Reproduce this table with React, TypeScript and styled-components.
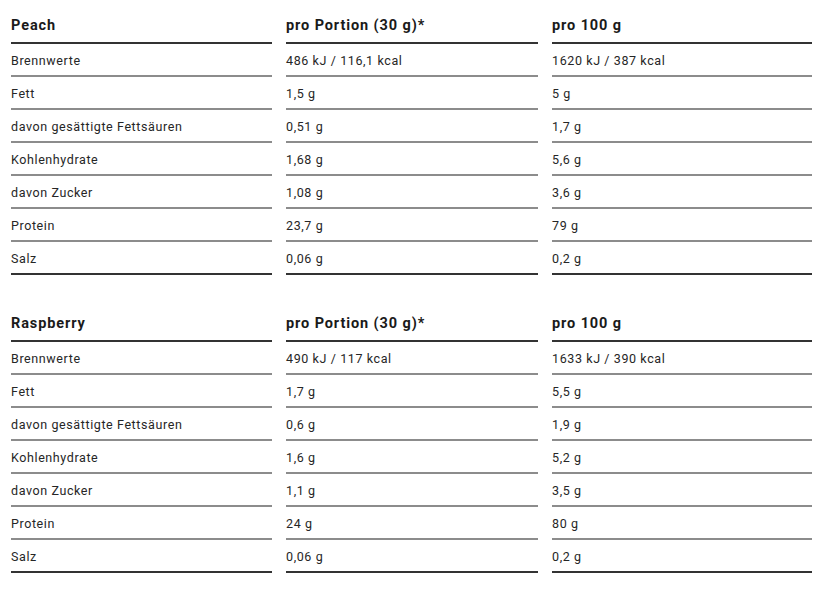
import styled, { createGlobalStyle } from 'styled-components'

const GlobalStyle = createGlobalStyle`
  body {
    margin: 0;
    background: #ffffff;
    font-family: Roboto, "Liberation Sans", sans-serif;
    color: #222222;
  }
`

const Page = styled.div`
  padding: 10px 19px 0 11px;
  display: flex;
  flex-direction: column;
  gap: 33px;
`

const Table = styled.div`
  display: flex;
  flex-direction: column;
  width: 801px;
`

const Row = styled.div`
  display: grid;
  grid-template-columns: 261px 252px 260px;
  column-gap: 14px;
`

const HeadCell = styled.div`
  height: 34px;
  box-sizing: border-box;
  display: flex;
  align-items: center;
  border-bottom: 2px solid #333333;
  font-size: 14.5px;
  font-weight: 700;
  color: #1a1a1a;
  letter-spacing: 0.9px;
  padding-bottom: 2px;
`

const Cell = styled.div<{ $last?: boolean }>`
  height: 33px;
  box-sizing: border-box;
  display: flex;
  align-items: center;
  border-bottom: 2px solid ${p => (p.$last ? '#333333' : '#8c8c8c')};
  font-size: 12.5px;
  letter-spacing: 0.6px;
  color: #262626;
  padding-top: 1px;
`

type Data = { name: string; rows: [string, string, string][] }

const tables: Data[] = [
  {
    name: 'Peach',
    rows: [
      ['Brennwerte', '486 kJ / 116,1 kcal', '1620 kJ / 387 kcal'],
      ['Fett', '1,5 g', '5 g'],
      ['davon gesättigte Fettsäuren', '0,51 g', '1,7 g'],
      ['Kohlenhydrate', '1,68 g', '5,6 g'],
      ['davon Zucker', '1,08 g', '3,6 g'],
      ['Protein', '23,7 g', '79 g'],
      ['Salz', '0,06 g', '0,2 g'],
    ],
  },
  {
    name: 'Raspberry',
    rows: [
      ['Brennwerte', '490 kJ / 117 kcal', '1633 kJ / 390 kcal'],
      ['Fett', '1,7 g', '5,5 g'],
      ['davon gesättigte Fettsäuren', '0,6 g', '1,9 g'],
      ['Kohlenhydrate', '1,6 g', '5,2 g'],
      ['davon Zucker', '1,1 g', '3,5 g'],
      ['Protein', '24 g', '80 g'],
      ['Salz', '0,06 g', '0,2 g'],
    ],
  },
]

const NutritionTable = ({ data }: { data: Data }) => (
  <Table>
    <Row>
      <HeadCell>{data.name}</HeadCell>
      <HeadCell>pro Portion (30 g)*</HeadCell>
      <HeadCell>pro 100 g</HeadCell>
    </Row>
    {data.rows.map((r, i) => {
      const last = i === data.rows.length - 1
      return (
        <Row key={r[0]}>
          {r.map((v, j) => (
            <Cell key={j} $last={last}>
              {v}
            </Cell>
          ))}
        </Row>
      )
    })}
  </Table>
)

export default function App() {
  return (
    <>
      <GlobalStyle />
      <Page>
        {tables.map(t => (
          <NutritionTable key={t.name} data={t} />
        ))}
      </Page>
    </>
  )
}
